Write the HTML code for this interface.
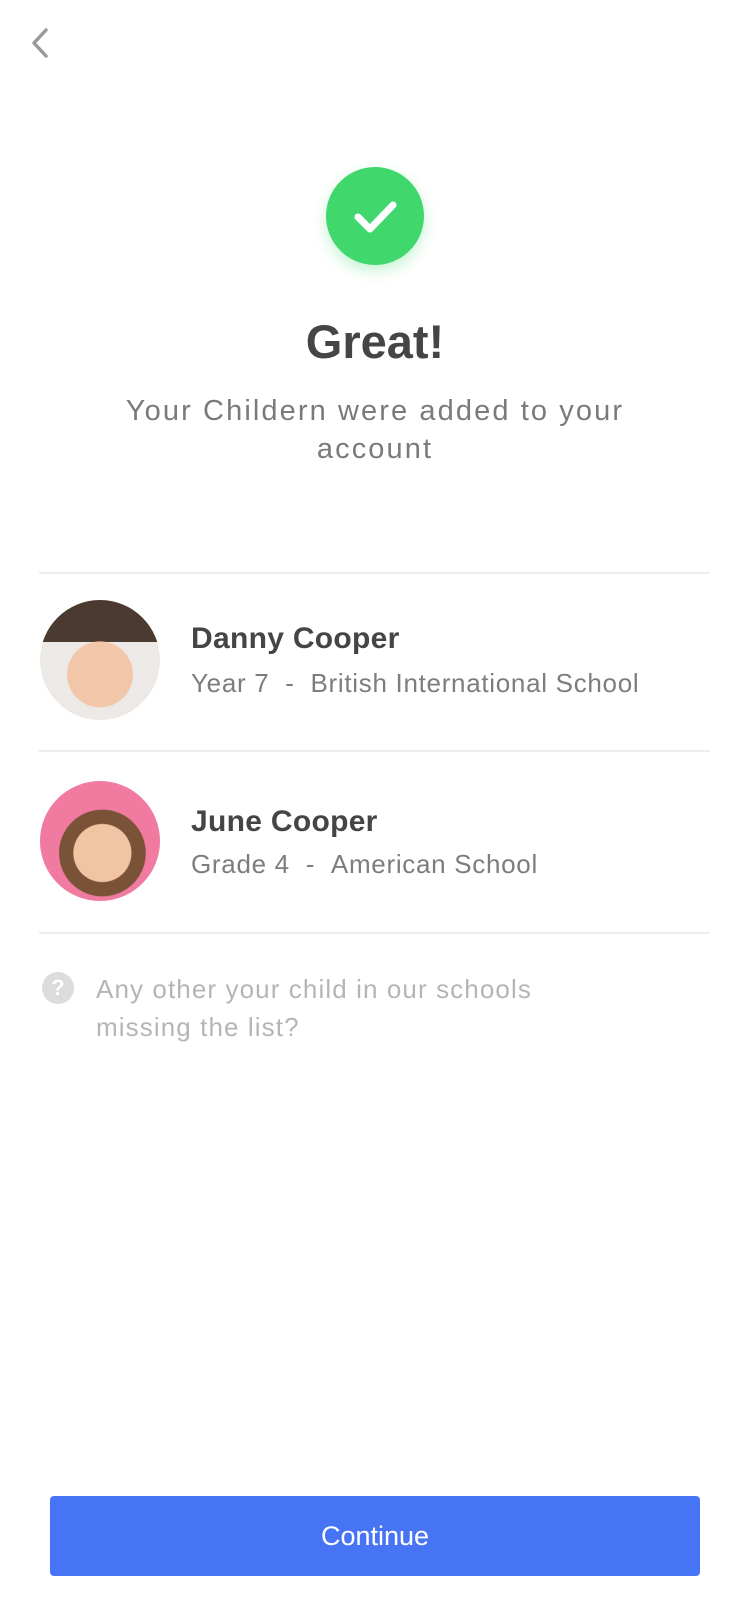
<!DOCTYPE html>
<html><head><meta charset="utf-8"><style>
*{margin:0;padding:0;box-sizing:border-box}
body{width:750px;height:1624px;background:#fff;font-family:"Liberation Sans",sans-serif;position:relative;overflow:hidden}
.a{position:absolute}
.line{position:absolute;left:39px;width:671px;height:2px;background:#ededed}
.name{position:absolute;left:191px;font-size:30px;font-weight:bold;color:#454545;line-height:36px;letter-spacing:0.3px}
.sub{position:absolute;left:191px;font-size:26px;color:#7d7d7d;line-height:32px;letter-spacing:0.7px}
.av{position:absolute;left:40px;width:120px;height:120px;border-radius:50%;overflow:hidden}
</style></head><body>
<svg class="a" style="left:26px;top:26px" width="28" height="34" viewBox="0 0 28 34"><path d="M20 4 L8 17 L20 30" fill="none" stroke="#9a9a9a" stroke-width="3.5" stroke-linecap="round" stroke-linejoin="round"/></svg>
<div class="a" style="left:326px;top:167px;width:98px;height:98px;border-radius:50%;background:#40d86d;box-shadow:0 6px 14px rgba(64,216,109,0.3)"></div>
<svg class="a" style="left:326px;top:167px" width="98" height="98" viewBox="0 0 98 98"><path d="M32 50 L44 62 L67 38" fill="none" stroke="#fff" stroke-width="7" stroke-linecap="round" stroke-linejoin="round"/></svg>
<div class="a" style="left:0;width:750px;top:314px;text-align:center;font-size:47px;font-weight:bold;color:#454545;line-height:56px">Great!</div>
<div class="a" style="left:0;width:750px;top:392px;text-align:center;font-size:29px;color:#7a7a7a;line-height:38px;letter-spacing:2.1px">Your Childern were added to your<br>account</div>
<div class="line" style="top:572px"></div>
<div class="av" style="top:600px;background:radial-gradient(circle at 50% 62%,#f2c6a8 0 34%,transparent 35%),linear-gradient(#4a3a30 0 35%,#ede9e6 35%)"></div>
<div class="name" style="top:621px">Danny Cooper</div>
<div class="sub" style="top:667px">Year 7 &nbsp;- &nbsp;British International School</div>
<div class="line" style="top:750px"></div>
<div class="av" style="top:781px;background:radial-gradient(circle at 52% 60%,#f1c4a4 0 30%,#7a5238 31% 45%,#f07aa0 46%)"></div>
<div class="name" style="top:804px">June Cooper</div>
<div class="sub" style="top:848px">Grade 4 &nbsp;- &nbsp;American School</div>
<div class="line" style="top:932px"></div>
<div class="a" style="left:42px;top:972px;width:32px;height:32px;border-radius:50%;background:#dcdcdc;color:#fff;font-size:22px;font-weight:bold;text-align:center;line-height:32px">?</div>
<div class="a" style="left:96px;top:970px;font-size:26px;color:#b5b5b5;line-height:38px;letter-spacing:1.1px">Any other your child in our schools<br>missing the list?</div>
<div class="a" style="left:50px;top:1496px;width:650px;height:80px;background:#4774f5;border-radius:4px;color:#fff;font-size:27px;text-align:center;line-height:80px">Continue</div>
</body></html>
